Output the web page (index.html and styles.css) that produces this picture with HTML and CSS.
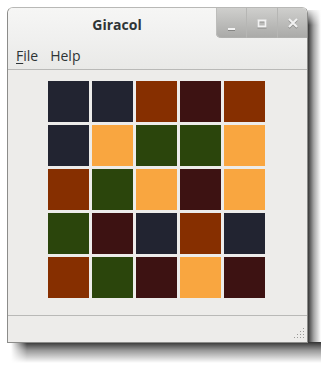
FILE: index.html
```html
<!DOCTYPE html>
<html lang="en">
<head>
    <meta charset="UTF-8">
    <title>Giracol</title>
    <link rel="stylesheet" href="styles.css">
</head>
<body>
    <div class="frame">
    <div class="window">
        <div class="titlebar">
            <span class="title">Giracol</span>
            <div class="buttons">
                <div class="btn"><svg width="30" height="30" viewBox="0 0 30 30"><rect x="12" y="20" width="7" height="2" fill="#f2f2f2"/></svg></div>
                <div class="btn"><svg width="30" height="30" viewBox="0 0 30 30"><rect x="11.5" y="12.5" width="7" height="6" fill="none" stroke="#f2f2f2" stroke-width="2"/></svg></div>
                <div class="btn"><svg width="30" height="30" viewBox="0 0 30 30"><path d="M11 11 L19 19 M19 11 L11 19" stroke="#f2f2f2" stroke-width="2"/></svg></div>
            </div>
        </div>
        <div class="menubar">
            <span class="menu"><u>F</u>ile</span>
            <span class="menu">Help</span>
        </div>
        <div class="content">
            <div class="grid">
                <div class="cell navy"></div><div class="cell navy"></div><div class="cell rust"></div><div class="cell maroon"></div><div class="cell rust"></div>
                <div class="cell navy"></div><div class="cell orange"></div><div class="cell green"></div><div class="cell green"></div><div class="cell orange"></div>
                <div class="cell rust"></div><div class="cell green"></div><div class="cell orange"></div><div class="cell maroon"></div><div class="cell orange"></div>
                <div class="cell green"></div><div class="cell maroon"></div><div class="cell navy"></div><div class="cell rust"></div><div class="cell navy"></div>
                <div class="cell rust"></div><div class="cell green"></div><div class="cell maroon"></div><div class="cell orange"></div><div class="cell maroon"></div>
            </div>
        </div>
        <div class="statusbar">
            <svg class="grip" width="12" height="12" viewBox="0 0 12 12" fill="#9a9a98">
                <rect x="10" y="1" width="1" height="1"/>
                <rect x="7" y="4" width="1" height="1"/><rect x="10" y="4" width="1" height="1"/>
                <rect x="4" y="7" width="1" height="1"/><rect x="7" y="7" width="1" height="1"/><rect x="10" y="7" width="1" height="1"/>
                <rect x="1" y="10" width="1" height="1"/><rect x="4" y="10" width="1" height="1"/><rect x="7" y="10" width="1" height="1"/><rect x="10" y="10" width="1" height="1"/>
            </svg>
        </div>
    </div>
    </div>
</body>
</html>
```

FILE: styles.css
```css
body { margin: 0; padding-top: 7px; background: #ffffff; font-family: "Open Sans", "DejaVu Sans", sans-serif; }
/* window shadow painted as background strips on the frame */
.frame {
    margin-left: 7px; width: 301px; padding: 0 13px 21px 0;
    background:
        linear-gradient(to bottom, #fff, rgba(255, 255, 255, 0)) 301px 0 / 13px 18px no-repeat,
        linear-gradient(to right, rgba(0, 0, 0, 0.78), rgba(0, 0, 0, 0.35) 45%, rgba(0, 0, 0, 0)) 301px 3px / 13px 332px no-repeat,
        linear-gradient(to right, #fff, rgba(255, 255, 255, 0)) 4px 335px / 16px 21px no-repeat,
        linear-gradient(to bottom, rgba(0, 0, 0, 0.8), rgba(0, 0, 0, 0.4) 40%, rgba(0, 0, 0, 0)) 4px 335px / 310px 21px no-repeat;
}
.window { width: 299px; height: 334px; display: flex; flex-direction: column; border: 1px solid #8c8c8a; border-top-color: #b8b8b6; border-radius: 6px 6px 0 0; background: #edecea; overflow: hidden; }
.titlebar { height: 30px; flex-shrink: 0; display: flex; justify-content: space-between; background: linear-gradient(#f6f6f5, #f0f0ef); }
.title { flex: 1; text-align: center; padding-left: 10px; font-size: 14px; font-weight: bold; color: #2e3436; line-height: 34px; }
.buttons { display: flex; width: 91px; height: 30px; background: linear-gradient(#cfcfcd, #a9a9a7); border-radius: 0 0 0 5px; box-shadow: inset 1px 0 0 #bdbdbb, inset 0 -1px 0 #b0b0ae; }
.btn { width: 30px; height: 30px; border-left: 1px solid #b6b6b4; }
.btn:first-child { border-left: none; }
.btn svg { display: block; filter: drop-shadow(0 1px 0 rgba(0, 0, 0, 0.25)); }
.menubar { height: 31px; flex-shrink: 0; display: flex; gap: 12px; padding-left: 8px; background: linear-gradient(#f0f0ef, #e9e9e7); border-bottom: 1px solid #b9b9b7; font-size: 14px; color: #2e3436; line-height: 36px; }
.menu u { text-decoration-thickness: 1px; text-underline-offset: 2px; }
.content { flex: 1; padding: 11px 0 0 40px; }
.grid { display: grid; grid-template-columns: repeat(5, 41px); grid-auto-rows: 41px; gap: 3px; }
.navy { background: #222431; }
.rust { background: #862f00; }
.maroon { background: #3d1212; }
.green { background: #2b450c; }
.orange { background: #f9a640; }
.statusbar { height: 27px; flex-shrink: 0; border-top: 1px solid #b9b9b7; display: flex; justify-content: flex-end; align-items: flex-end; padding: 0 2px 3px 0; box-sizing: border-box; }
.grip { display: block; }
```
